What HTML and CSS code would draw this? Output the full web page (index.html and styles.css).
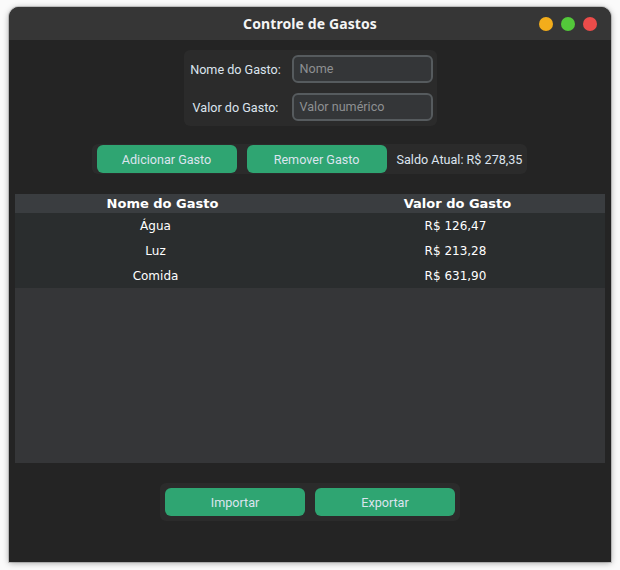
FILE: index.html
```html
<!DOCTYPE html>
<html lang="pt-BR">
<head>
<meta charset="utf-8">
<title>Controle de Gastos</title>
<link rel="stylesheet" href="styles.css">
</head>
<body>
<div class="window">
  <div class="titlebar">
    <div class="spacer"></div>
    <div class="title">Controle de Gastos</div>
    <div class="lights">
      <span class="light yellow"></span>
      <span class="light green"></span>
      <span class="light red"></span>
    </div>
  </div>
  <div class="content">
    <div class="form-group">
      <div class="form-label">Nome do Gasto:</div>
      <div class="entry placeholder">Nome</div>
      <div class="form-label">Valor do Gasto:</div>
      <div class="entry placeholder">Valor numérico</div>
    </div>
    <div class="action-group">
      <button class="btn">Adicionar Gasto</button>
      <button class="btn">Remover Gasto</button>
      <div class="saldo">Saldo Atual: R$ 278,35</div>
    </div>
    <div class="table">
      <div class="thead">
        <div class="th">Nome do Gasto</div>
        <div class="th">Valor do Gasto</div>
      </div>
      <div class="row">
        <div class="td name">Água</div>
        <div class="td value">R$ 126,47</div>
      </div>
      <div class="row">
        <div class="td name">Luz</div>
        <div class="td value">R$ 213,28</div>
      </div>
      <div class="row">
        <div class="td name">Comida</div>
        <div class="td value">R$ 631,90</div>
      </div>
      <div class="table-fill"></div>
    </div>
    <div class="io-group">
      <button class="btn">Importar</button>
      <button class="btn">Exportar</button>
    </div>
  </div>
</div>
</body>
</html>
```
FILE: styles.css
```css
html, body {
  margin: 0;
  padding: 0;
}
body {
  background: #fafafa;
  width: 620px;
  height: 570px;
  overflow: hidden;
  font-family: Roboto, "Liberation Sans", sans-serif;
}
.window {
  margin: 7px 0 0 9px;
  width: 602px;
  height: 555px;
  background: #242424;
  border-radius: 10px 10px 0 0;
  box-shadow: 0 1px 6px rgba(0, 0, 0, 0.35), 0 0 0 1px rgba(0, 0, 0, 0.15);
  display: flex;
  flex-direction: column;
  overflow: hidden;
}
.titlebar {
  height: 33px;
  background: #363636;
  display: grid;
  grid-template-columns: 1fr auto 1fr;
  align-items: center;
}
.title {
  font-family: "Noto Sans", "DejaVu Sans", sans-serif;
  font-weight: 700;
  font-size: 14px;
  color: #f4f4f4;
  letter-spacing: 0.1px;
}
.lights {
  display: flex;
  justify-content: flex-end;
  gap: 8px;
  padding-right: 14px;
}
.light {
  width: 14px;
  height: 14px;
  border-radius: 50%;
}
.yellow { background: #f3ad1b; }
.green { background: #53c83a; }
.red { background: #eb4c4a; }

.content {
  flex: 1;
  display: flex;
  flex-direction: column;
  align-items: center;
  padding-top: 10px;
}
.form-group {
  background: #2b2b2b;
  border-radius: 6px;
  padding: 5px 4px;
  display: grid;
  grid-template-columns: 96px 141px;
  column-gap: 8px;
  row-gap: 10px;
  align-items: center;
}
.form-label {
  font-size: 12.6px;
  color: #dce4ee;
  text-align: center;
}
.entry {
  height: 28px;
  box-sizing: border-box;
  border: 2px solid #565b5e;
  background: #343638;
  border-radius: 6px;
  font-size: 12.6px;
  line-height: 24px;
  padding-left: 6px;
}
.placeholder {
  color: #8e9092;
}
.btn {
  width: 140px;
  height: 28px;
  border: none;
  border-radius: 6px;
  background: #2fa572;
  color: #dce4ee;
  font-family: Roboto, "Liberation Sans", sans-serif;
  font-size: 12.6px;
  padding: 0;
}
.action-group {
  margin-top: 18px;
  background: #2b2b2b;
  border-radius: 6px;
  padding: 1px 5px 1px 5px;
  display: flex;
  align-items: center;
  gap: 10px;
  margin-left: -1px;
}
.saldo {
  font-size: 12.6px;
  color: #dce4ee;
}
.table {
  margin-top: 20px;
  align-self: stretch;
  margin-left: 6px;
  margin-right: 6px;
  height: 269px;
  background: #353638;
  display: flex;
  flex-direction: column;
  font-family: "DejaVu Sans", sans-serif;
  color: #ffffff;
}
.thead, .row {
  display: grid;
  grid-template-columns: 1fr 1fr;
  align-items: center;
  text-align: center;
}
.thead {
  height: 19px;
  background: #3a3d40;
  font-weight: 700;
  font-size: 13px;
}
.row {
  height: 25px;
  background: #2a2d2e;
  font-size: 12px;
}
.td.name {
  padding-right: 14px;
}
.td.value {
  padding-right: 4px;
}
.table-fill {
  flex: 1;
}
.io-group {
  margin-top: 20px;
  background: #2b2b2b;
  border-radius: 6px;
  padding: 5px;
  display: flex;
  gap: 10px;
}
```
